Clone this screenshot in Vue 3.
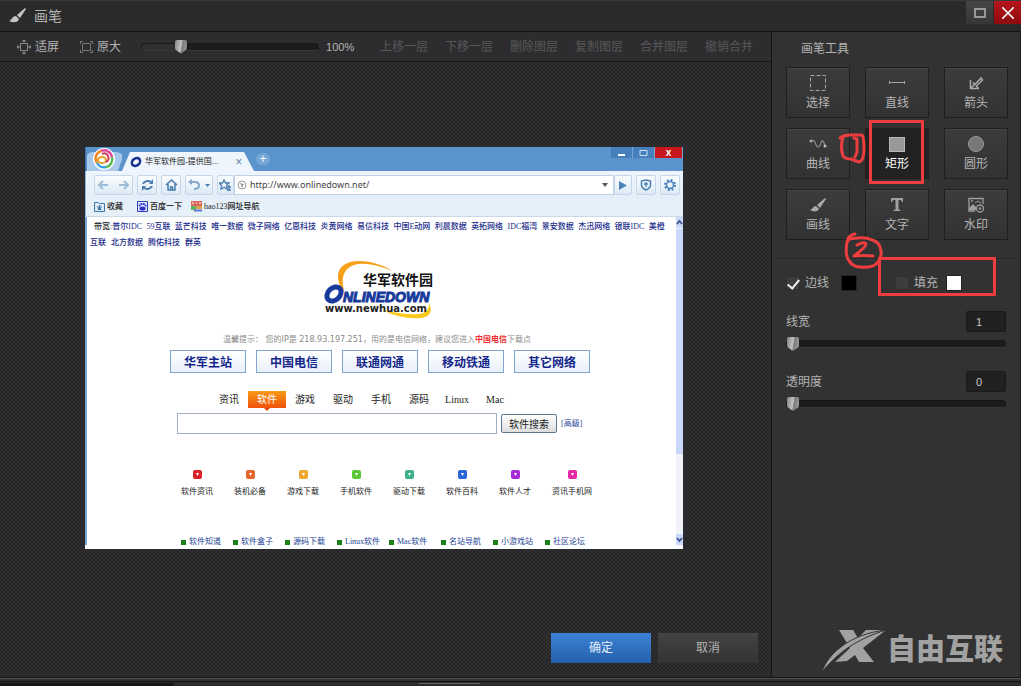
<script setup>
import { ref } from 'vue'

const zoom = ref(20)
const lineWidth = ref(1)
const opacity = ref(0)
const stroke = ref(true)
const fill = ref(false)
const address = ref('http://www.onlinedown.net/')
const keyword = ref('')
const active = ref('rect')

const layerActions = ['上移一层', '下移一层', '删除图层', '复制图层', '合并图层', '撤销合并']
const tools = [
  { id: 'select', label: '选择' },
  { id: 'line', label: '直线' },
  { id: 'arrow', label: '箭头' },
  { id: 'curve', label: '曲线' },
  { id: 'rect', label: '矩形' },
  { id: 'circle', label: '圆形' },
  { id: 'brush', label: '画线' },
  { id: 'text', label: '文字' },
  { id: 'mark', label: '水印' }
]
const sponsors = ['59互联', '蓝芒科技', '唯一数据', '微子网络', '亿恩科技', '炎黄网络', '易信科技', '中国E动网', '利晨数据', '英拓网络', 'IDC福湾', '景安数据', '杰迅网络', '银联IDC', '美橙']
const sponsorsNext = ['互联', '北方数据', '腾佑科技', '群英']
const networks = ['华军主站', '中国电信', '联通网通', '移动铁通', '其它网络']
const tabs = ['资讯', '软件', '游戏', '驱动', '手机', '源码', 'Linux', 'Mac']
const channels = [
  { label: '软件资讯', tone: 'red' },
  { label: '装机必备', tone: 'orange' },
  { label: '游戏下载', tone: 'amber' },
  { label: '手机软件', tone: 'green' },
  { label: '驱动下载', tone: 'teal' },
  { label: '软件百科', tone: 'blue' },
  { label: '软件人才', tone: 'purple' },
  { label: '资讯手机网', tone: 'pink' }
]
const footers = ['软件知道', '软件盒子', '源码下载', 'Linux软件', 'Mac软件', '名站导航', '小游戏站', '社区论坛']
</script>

<template>
  <div class="app">
    <header class="titlebar">
      <svg class="brush" width="18" height="16" viewBox="0 0 18 16">
        <path d="M0 13c3-1 3-5 7-5l3 3c-1 4-6 4-10 2zM8 7l8-7 1 1-6 9z" fill="#c4c4c4" />
      </svg>
      <h1>画笔</h1>
      <div class="winbtns">
        <button class="max" aria-label="最大化">
          <svg width="12" height="10" viewBox="0 0 12 10"><rect x="1" y="1" width="10" height="8" fill="none" stroke="#999" stroke-width="2" /></svg>
        </button>
        <button class="close" aria-label="关闭">
          <svg width="12" height="12" viewBox="0 0 12 12"><path d="M0 0l12 12M12 0L0 12" stroke="#eee" stroke-width="1.600" /></svg>
        </button>
      </div>
    </header>

    <div class="main">
      <section class="left">
        <div class="toolbar">
          <button class="fit">
            <svg width="14" height="14" viewBox="0 0 14 14"><rect x="3.500" y="3.500" width="7" height="7" fill="none" stroke="#888" /><path d="M5 0h4L7 3zM5 14h4l-2-3zM0 5v4l3-2zM14 5v4l-3-2z" fill="#888" /></svg>
            适屏
          </button>
          <button class="orig">
            <svg width="13" height="12" viewBox="0 0 13 12"><path d="M2.500 2.500h8v7h-8zM0 .5h3M.5 0v3M10 .5h3M12.500 0v3M0 11.500h3M.5 9v3M10 11.500h3M12.500 9v3" fill="none" stroke="#777" /></svg>
            原大
          </button>
          <input v-model="zoom" class="range zoom" type="range" min="0" max="100" aria-label="缩放">
          <span class="pct">100%</span>
          <div class="layers">
            <button v-for="a in layerActions" :key="a" disabled>{{ a }}</button>
          </div>
        </div>

        <div class="canvas">
          <article class="shot">
            <div class="b-title">
              <svg class="orb" width="36" height="24" viewBox="0 0 36 24">
                <path d="M1 24V9Q2 5 7 5h22q6 0 8 4l-5 15z" fill="#a9c9ea" />
                <circle cx="18" cy="12" r="11" fill="#fff" />
                <g fill="none" stroke-width="2.500">
                  <path d="M11 16a8 8 0 0 1 4-12" stroke="#f08a24" />
                  <path d="M15 4a8 8 0 0 1 11 6" stroke="#e5479a" />
                  <path d="M26 10a8 8 0 0 1-6 10" stroke="#59b94c" />
                  <path d="M20 20a8 8 0 0 1-9-4" stroke="#39a0dd" />
                  <ellipse cx="16" cy="13" rx="4" ry="3" stroke="#e2a02b" stroke-width="2" />
                  <path d="M20 15q4-2 2-6t-6-2" stroke="#ce3f5c" stroke-width="2" />
                </g>
              </svg>
              <div class="b-tab">
                <svg width="12" height="12" viewBox="0 0 12 12"><ellipse cx="6" cy="6" rx="4.500" ry="3.500" fill="none" stroke="#16308f" stroke-width="2.500" transform="rotate(-40 6 6)" /></svg>
                <span>华军软件园-提供国...</span>
                <i>×</i>
              </div>
              <span class="b-plus">+</span>
              <div class="b-win">
                <span><svg width="9" height="8" viewBox="0 0 9 8"><path d="M1 6h7" stroke="#fff" stroke-width="2" /></svg></span>
                <span><svg width="9" height="8" viewBox="0 0 9 8"><path d="M1 1.500h7v5H1z" fill="none" stroke="#cfe0f2" /></svg></span>
                <span class="x">x</span>
              </div>
            </div>

            <div class="b-nav">
              <button class="pair" aria-label="后退 前进">
                <svg width="34" height="12" viewBox="0 0 34 12"><path d="M11 6H2M6 2L2 6l4 4M22 6h9M27 2l4 4-4 4" fill="none" stroke="#9dbcd8" stroke-width="2" /></svg>
              </button>
              <button aria-label="刷新">
                <svg width="13" height="12" viewBox="0 0 13 12"><path d="M2 5a5 4 0 0 1 8-2M11 7a5 4 0 0 1-8 2" fill="none" stroke="#4b7eae" stroke-width="2" /><path d="M12 0v5H8zM1 12V7h4z" fill="#4b7eae" /></svg>
              </button>
              <button aria-label="主页">
                <svg width="13" height="12" viewBox="0 0 13 12"><path d="M1 6l5.500-5L12 6M3 5v6h7V5M5.500 11V8h2v3" fill="none" stroke="#4b7eae" stroke-width="1.500" /></svg>
              </button>
              <button class="undo" aria-label="撤销">
                <svg width="24" height="12" viewBox="0 0 24 12"><path d="M2 3h6q4 0 4 3.500T7 10" fill="none" stroke="#85a9ca" stroke-width="2" /><path d="M5 0v6L1 3z" fill="#85a9ca" /><path d="M18 5h5l-2.500 3z" fill="#4b7eae" /></svg>
              </button>
              <button class="star" aria-label="收藏此页">
                <svg width="13" height="13" viewBox="0 0 13 13"><path d="M5 1l1.500 3L10 4 7.500 6.500 8 10 5 8.500 2 10l.5-3.500L0 4l3.500 0zM8 8h4M8 11h4M10 6v6" fill="none" stroke="#4b7eae" stroke-width="1.300" /></svg>
              </button>
              <label class="addr">
                <svg width="10" height="10" viewBox="0 0 10 10"><circle cx="5" cy="5" r="4" fill="none" stroke="#999" /><path d="M3 3l4 1-2 4-1-3z" fill="#999" /></svg>
                <input v-model="address" type="text" aria-label="地址">
                <svg width="6" height="4" viewBox="0 0 6 4"><path d="M0 0h6L3 4z" fill="#555" /></svg>
              </label>
              <button class="go" aria-label="转到">
                <svg width="8" height="9" viewBox="0 0 8 9"><path d="M0 0l8 4.500L0 9z" fill="#4b84bd" /></svg>
              </button>
              <button aria-label="安全">
                <svg width="12" height="12" viewBox="0 0 12 12"><path d="M6 1l4.500 1v4q0 3-4.500 5Q1.500 9 1.500 6V2z" fill="none" stroke="#4b7eae" stroke-width="1.500" /><path d="M6 3v5M4 5h4" stroke="#4b7eae" stroke-width="1.300" /></svg>
              </button>
              <button aria-label="设置">
                <svg width="12" height="12" viewBox="0 0 12 12"><circle cx="6" cy="6" r="3.500" fill="none" stroke="#4b84bd" stroke-width="1.500" /><circle cx="6" cy="6" r="5" fill="none" stroke="#4b84bd" stroke-width="2" stroke-dasharray="2 1.930" /></svg>
              </button>
            </div>

            <div class="b-marks">
              <a href="#"><svg width="11" height="11" viewBox="0 0 11 11"><path d="M.5 1.500h4l1 1h5v8H.5z" fill="#dcebf8" stroke="#3f76a8" /><path d="M5.500 4v5M3 6h5M4 9l1.500-3L7 9" stroke="#3f76a8" /></svg>收藏</a>
              <a href="#" class="baidu"><svg width="11" height="11" viewBox="0 0 11 11"><rect width="11" height="11" fill="#dfe4ff" /><path d="M.5.5h10v10H.5z" fill="none" stroke="#3340c4" /><ellipse cx="5.500" cy="7.500" rx="3" ry="2" fill="#2932c8" /><circle cx="2.700" cy="4.500" r="1" fill="#2932c8" /><circle cx="4.500" cy="3" r="1.100" fill="#2932c8" /><circle cx="6.800" cy="3" r="1.100" fill="#2932c8" /><circle cx="8.500" cy="4.500" r="1" fill="#2932c8" /></svg>百度一下</a>
              <a href="#" class="hao"><svg width="11" height="11" viewBox="0 0 11 11"><rect width="11" height="5" fill="#dc6657" /><rect y="5" width="5" height="4" fill="#5daf62" /><rect x="5" y="5" width="6" height="3" fill="#d7a44e" /><path d="M1 2h2M5 2h1M8 2h2" stroke="#fff" /><path d="M3 9.500h8" stroke="#5b77ce" stroke-width="2" /></svg>hao123网址导航</a>
            </div>

            <div class="b-body">
              <div class="page">
                <p class="sponsors"><span class="lead">带宽:<a href="#">普尔IDC</a></span><a v-for="s in sponsors" :key="s" href="#">{{ s }}</a></p>
                <p class="sponsors next"><a v-for="s in sponsorsNext" :key="s" href="#">{{ s }}</a></p>

                <svg class="logo" width="120" height="60" viewBox="0 0 120 60">
                  <path d="M20 30C9 10 21-3 48 2q14 3 22 9Q46 1 32 5 17 10 22 31z" fill="#f7a11b" />
                  <path d="M60 50q22 5 37 4 11-2 10-11 6 13-8 15-18 2-39-8z" fill="#fbc91c" />
                  <text x="41" y="25" class="l-cn">华军软件园</text>
                  <ellipse cx="12" cy="34" rx="8" ry="6" fill="none" stroke="#173a9c" stroke-width="5" transform="rotate(-45 12 34)" />
                  <text x="21" y="42" class="l-en">NLINEDOWN</text>
                  <text x="3" y="52" class="l-url">www.newhua.com</text>
                </svg>

                <p class="tip">温馨提示： 您的IP是 218.93.197.251，用的是电信网络，建议您进入<b>中国电信</b>下载点</p>
                <div class="nets"><button v-for="n in networks" :key="n">{{ n }}</button></div>
                <nav class="tabs">
                  <a v-for="t in tabs" :key="t" href="#" :class="{ on: t === '软件' }">{{ t }}</a>
                </nav>
                <form class="search" @submit.prevent>
                  <input v-model="keyword" type="text" aria-label="搜索">
                  <button>软件搜索</button>
                  <a href="#">[高级]</a>
                </form>
                <div class="channels">
                  <a v-for="c in channels" :key="c.label" href="#">
                    <i :class="c.tone"><svg width="9" height="9" viewBox="0 0 9 9"><path d="M3 3l1.500 3L6 3z" fill="#fff" /></svg></i>
                    {{ c.label }}
                  </a>
                </div>
                <div class="foot"><a v-for="f in footers" :key="f" href="#"><i></i>{{ f }}</a></div>
              </div>
              <div class="scroll">
                <span><svg width="7" height="5" viewBox="0 0 7 5"><path d="M1 4l2.500-3L6 4" fill="none" stroke="#3c5591" stroke-width="1.800" /></svg></span>
                <span class="thumb"></span>
                <span class="down"><svg width="7" height="5" viewBox="0 0 7 5"><path d="M1 1l2.500 3L6 1" fill="none" stroke="#3c5591" stroke-width="1.800" /></svg></span>
              </div>
            </div>
          </article>
        </div>

        <div class="actions">
          <button class="ok">确定</button>
          <button class="cancel">取消</button>
        </div>
      </section>

      <aside class="panel">
        <h2>画笔工具</h2>
        <div class="tools">
          <button v-for="t in tools" :key="t.id" :class="{ on: t.id === active }" @click="active = t.id">
            <svg width="18" height="18" viewBox="0 0 18 18">
              <rect v-if="t.id === 'select'" x="1.500" y="1.500" width="15" height="15" fill="none" stroke="#a5a5a5" stroke-dasharray="4 2" />
              <path v-else-if="t.id === 'line'" d="M1 8.500h16M1.500 7v3M16.500 7v3M15.500 8v1" fill="none" stroke="#a5a5a5" />
              <path v-else-if="t.id === 'arrow'" d="M3.500 6v8.500H12M3.500 14.500l4-4M6 8.500l2 2 6-6.500 1.500 2-6 6 1.500 2" fill="none" stroke="#aaa" stroke-width="1.500" />
              <g v-else-if="t.id === 'curve'"><path d="M2 6c5-3 4 6 7 6s3-8 5-6 1 4 2 5" fill="none" stroke="#8b8b8b" stroke-width="1.300" /><circle cx="2" cy="6" r="1.500" fill="#aaa" /><circle cx="16" cy="11" r="1.500" fill="#bbb" /></g>
              <rect v-else-if="t.id === 'rect'" x="1.500" y="2.500" width="15" height="14" fill="#999" stroke="#b8b8b8" />
              <circle v-else-if="t.id === 'circle'" cx="9" cy="9" r="7.500" fill="#777" stroke="#999" />
              <path v-else-if="t.id === 'brush'" d="M1 14c3-1 3-4 6-4l3 3c-1 3-6 3-9 1zM8 9l8-7 1 1-6 9z" fill="#a8a8a8" />
              <path v-else-if="t.id === 'text'" d="M3 2h12v4h-1q0-2-2-2h-1.500v9q0 1 2 1v1h-7v-1q2 0 2-1V4H6Q4 4 4 6H3z" fill="#a0a0a0" />
              <g v-else><path d="M16 8V2.500H2V15h6" fill="none" stroke="#a0a0a0" stroke-width="1.300" /><path d="M2 12l4-4 3 3v3H2z" fill="#a0a0a0" /><circle cx="5" cy="5" r="1" fill="#a0a0a0" /><path d="M8 7l3-2 3 2" fill="none" stroke="#a0a0a0" /><circle cx="13" cy="12.500" r="3.500" fill="#353535" stroke="#a0a0a0" stroke-width="1.300" /><circle cx="13" cy="12.500" r="1.300" fill="#a0a0a0" /></g>
            </svg>
            <span>{{ t.label }}</span>
          </button>
        </div>

        <div class="opts">
          <label><input v-model="stroke" type="checkbox">边线</label>
          <button class="swatch black" aria-label="边线颜色"></button>
          <label class="fill"><input v-model="fill" type="checkbox">填充</label>
          <button class="swatch white" aria-label="填充颜色"></button>
        </div>

        <div class="field">
          <label for="lw">线宽</label>
          <input id="lw" v-model="lineWidth" type="text">
        </div>
        <input class="range" type="range" min="0" max="100" value="0" aria-label="线宽滑块">
        <div class="field">
          <label for="op">透明度</label>
          <input id="op" v-model="opacity" type="text">
        </div>
        <input class="range" type="range" min="0" max="100" value="0" aria-label="透明度滑块">

        <div class="mark">
          <svg width="66" height="44" viewBox="822 628 66 44">
            <path d="M840 629h14l5 8 8-8h20L864 647l11 14h-15l-4-7-8 6-12 1 15-14z" fill="#a2a2a2" />
            <path d="M823 671c5-17 27-38 64-42-26 8-46 20-64 42z" fill="#a2a2a2" stroke="#323232" />
          </svg>
          <strong>自由互联</strong>
        </div>

        <svg class="notes" width="249" height="270" viewBox="772 32 249 270">
          <g fill="none" stroke="#ee3d3f" stroke-width="3">
            <rect x="870.500" y="121.500" width="52" height="61" />
            <rect x="879.500" y="258.500" width="115" height="36" />
            <g stroke-linecap="round" stroke-linejoin="round">
              <path d="M843 137q-3 10 0 19 2 3 8 3l8 3q5-1 5-13t-2-14l-12 0q-6 0-10 3" />
              <path d="M854 138l3 1v13l-2 5" />
              <path d="M855 234q-7 1-8 8-2 12 1 17 4 8 12 8 12 1 16-3 6-5 5-13-1-9-9-11-6-3-14-2-9 0-10 3" />
              <path d="M857 245q8-4 9-1 0 3-12 12 9-1 19 0" />
            </g>
          </g>
        </svg>
      </aside>
    </div>
    <footer class="status"><span class="seg"></span><span class="grip"></span></footer>
  </div>
</template>

<style>
body {
  margin: 0;
  background: #2a2a2a;
}
</style>

<style scoped>
* {
  box-sizing: border-box;
}
.app {
  min-height: 100vh;
  display: flex;
  flex-direction: column;
  font: 12px/16px "Liberation Sans", "Noto Sans CJK SC", sans-serif;
  color: #b4b4b4;
}
h1, h2, p {
  margin: 0;
  font-weight: 400;
}
button {
  font: inherit;
  color: inherit;
  border: 0;
  padding: 0;
  background: none;
  white-space: nowrap;
}
a {
  color: inherit;
  text-decoration: none;
  white-space: nowrap;
}
svg {
  display: block;
  flex: none;
}
i {
  font-style: normal;
}
.titlebar {
  display: flex;
  align-items: center;
  height: 32px;
  padding-left: 9px;
  background: #2a2a2a;
  border-top: 1px solid #383838;
  border-bottom: 1px solid #141414;
}
h1 {
  font-size: 14px;
  margin-left: 7px;
}
.winbtns {
  display: flex;
  gap: 1px;
  margin-left: auto;
  align-self: flex-start;
}
.winbtns button {
  width: 27px;
  height: 23px;
  display: grid;
  place-items: center;
}
.max {
  background: linear-gradient(#464646, #353535);
}
.close {
  background: linear-gradient(#b5161b, #8c0a0e);
}
.main {
  flex: 1;
  display: grid;
  grid-template-columns: 1fr 250px;
}
.left {
  display: flex;
  flex-direction: column;
  background-color: #262628;
  background-image: radial-gradient(#303032 1px, transparent 1px), radial-gradient(#303032 1px, transparent 1px);
  background-size: 4px 4px;
  background-position: 0 0, 2px 2px;
}
.toolbar {
  display: flex;
  align-items: center;
  height: 30px;
  padding-left: 17px;
  background: #2d2d2f;
  border-bottom: 1px solid #151515;
}
.toolbar button {
  display: flex;
  align-items: center;
  gap: 4px;
}
.toolbar .orig {
  margin-left: 21px;
}
.layers {
  display: flex;
  gap: 17px;
  margin-left: 28px;
  color: #585858;
}
.range {
  appearance: none;
  display: block;
  width: 100%;
  height: 16px;
  margin: 0;
  background: none;
}
.range::-webkit-slider-runnable-track {
  height: 8px;
  border-radius: 4px;
  background: #1c1c1c;
  border: 1px solid #171717;
  border-bottom-color: #383838;
}
.range::-webkit-slider-thumb {
  appearance: none;
  width: 12px;
  height: 14px;
  margin-top: -4px;
  border-radius: 2px 2px 6px 6px;
  background: linear-gradient(100deg, #858585, #c4c4c4 50%, #7c7c7c 55%, #a0a0a0);
  clip-path: polygon(0 0, 100% 0, 100% 70%, 50% 100%, 0 70%);
}
.zoom {
  width: 178px;
  margin-left: 20px;
}
.zoom::-webkit-slider-runnable-track {
  background: linear-gradient(90deg, #303030 20%, #1c1c1c 20%);
}
.pct {
  width: 26px;
  margin-left: 7px;
  font-size: 11px;
}
.canvas {
  padding: 85px 88px 0 85px;
}
.actions {
  display: flex;
  justify-content: flex-end;
  gap: 7px;
  margin-top: auto;
  padding: 0 13px 14px 0;
}
.actions button {
  width: 100px;
  height: 30px;
}
.ok {
  background: linear-gradient(#3c83d8, #2560ab);
  color: #e2ecf8;
}
.cancel {
  background: linear-gradient(#434343, #333);
}

/* captured browser page */
.shot {
  background: #fdfeff;
  padding-bottom: 4px;
  color: #222;
  font-size: 8px;
  line-height: 12px;
}
.b-title {
  display: flex;
  height: 24px;
  background: #5b93cd;
  border-left: 1px solid #3d70a8;
}
.b-tab {
  display: flex;
  align-items: center;
  align-self: flex-end;
  gap: 3px;
  width: 132px;
  height: 19px;
  padding-left: 8px;
  background: #eef5fc;
  clip-path: polygon(0 100%, 8px 0, 122px 0, 100% 100%);
}
.b-tab i {
  margin-left: 14px;
  font-size: 12px;
  color: #6a87a5;
}
.b-plus {
  align-self: center;
  width: 14px;
  margin-left: 2px;
  border-radius: 7px;
  background: #76a6d8;
  color: #fff;
  font-size: 12px;
  text-align: center;
}
.b-win {
  display: flex;
  margin-left: auto;
}
.b-win span {
  width: 22px;
  height: 11px;
  display: grid;
  place-items: center;
  background: #4580bd;
  border-right: 1px solid #76a5d6;
}
.b-win .x {
  width: 28px;
  background: #c8171d;
  color: #fff;
  font: bold 10px/10px "Liberation Sans", sans-serif;
}
.b-nav {
  display: flex;
  align-items: center;
  gap: 4px;
  height: 28px;
  padding: 0 3px 0 8px;
  background: linear-gradient(#eef5fc, #e3eef8);
  border-left: 1px solid #8fb6dc;
}
.b-nav button {
  width: 20px;
  height: 20px;
  display: grid;
  place-items: center;
  background: linear-gradient(#fafdff, #dceaf6);
  border: 1px solid #c5d8ea;
  border-radius: 2px;
}
.b-nav .pair {
  width: 39px;
}
.b-nav .undo {
  width: 28px;
}
.b-nav .star {
  width: 17px;
  margin-right: -4px;
}
.b-nav .go {
  width: 18px;
  margin-left: -4px;
}
.addr {
  display: flex;
  flex: 1;
  align-items: center;
  gap: 3px;
  height: 20px;
  padding: 0 5px 0 2px;
  background: #fff;
  border: 1px solid #c0d2e4;
}
.addr input {
  flex: 1;
  min-width: 0;
  padding: 0;
  border: 0;
  background: none;
  color: #444;
  font: 9px/16px "Noto Sans", sans-serif;
}
.b-marks {
  display: flex;
  align-items: center;
  height: 18px;
  padding: 0 8px 2px;
  background: #e6f0f9;
  border-left: 1px solid #8fb6dc;
  border-bottom: 1px solid #cbd9e6;
}
.b-marks a {
  display: flex;
  align-items: center;
  gap: 2px;
  font-family: "Liberation Serif", "Noto Sans CJK SC", serif;
  font-weight: 500;
}
.baidu {
  margin-left: 14px;
}
.hao {
  margin-left: 9px;
}
.b-body {
  display: flex;
  border-left: 2px solid #7ba6d4;
  background: #fff;
}
.page {
  flex: 1;
  padding-top: 2px;
  font-family: "Liberation Serif", "Noto Sans CJK SC", serif;
}
.sponsors {
  display: flex;
  justify-content: space-between;
  padding: 0 11px 0 7px;
  line-height: 16px;
  font-weight: 500;
  color: #1c2d8c;
}
.lead {
  color: #222;
}
.lead a {
  color: #1c2d8c;
}
.sponsors.next {
  justify-content: flex-start;
  gap: 5px;
  padding-left: 3px;
}
.logo {
  margin: 9px 0 0 235px;
}
.l-cn {
  font: 700 14px "Noto Sans CJK SC", sans-serif;
  fill: #111;
}
.l-en {
  font: italic 700 14px "Liberation Sans", sans-serif;
  fill: #173a9c;
  stroke: #173a9c;
  stroke-width: 1px;
}
.l-url {
  font: 700 10px "DejaVu Sans", sans-serif;
  fill: #222;
}
.tip {
  margin: 14px 0 0 136px;
  white-space: nowrap;
  color: #8a8a8a;
  font-family: "DejaVu Sans", "Noto Sans CJK SC", sans-serif;
}
.tip b {
  color: #f03030;
}
.nets {
  display: flex;
  gap: 10px;
  margin: 4px 0 0 83px;
}
.nets button {
  width: 76px;
  height: 23px;
  border: 1px solid #82a5ce;
  background: linear-gradient(#fff, #e9f0fa);
  color: #14268a;
  font: 700 12px/20px "Noto Sans CJK SC", sans-serif;
}
.tabs {
  display: flex;
  margin: 18px 0 0 123px;
  font-size: 10px;
  line-height: 17px;
}
.tabs a {
  width: 38px;
  text-align: center;
}
.tabs .on {
  position: relative;
  color: #fff;
  background: linear-gradient(#f99a14, #f0520c);
}
.tabs .on::after {
  content: "";
  position: absolute;
  left: 16px;
  top: 17px;
  border: 3px solid transparent;
  border-top-color: #e0480c;
}
.search {
  display: flex;
  align-items: center;
  gap: 4px;
  margin: 5px 0 0 90px;
}
.search input {
  width: 320px;
  height: 21px;
  border: 1px solid #a3b0bf;
  background: #fff;
}
.search button {
  width: 56px;
  height: 19px;
  border: 1px solid #5c7994;
  border-radius: 2px;
  background: linear-gradient(#fff, #dedede);
  font: 10px/16px "Noto Sans CJK SC", sans-serif;
}
.search a {
  color: #1c3f95;
}
.channels {
  display: flex;
  gap: 21px;
  margin: 36px 0 0 94px;
}
.channels a {
  display: flex;
  flex-direction: column;
  align-items: center;
  gap: 7px;
}
.channels i {
  width: 9px;
  height: 9px;
  border-radius: 2px;
}
.red { background: #d8232a; }
.orange { background: #e5652a; }
.amber { background: #f0a72f; }
.green { background: #5bc936; }
.teal { background: #3fb28c; }
.blue { background: #2a66d8; }
.purple { background: #a72bd6; }
.pink { background: #e32aa4; }
.foot {
  display: grid;
  grid-template-columns: repeat(8, 52px);
  height: 9px;
  margin: 38px 0 0 94px;
  overflow: hidden;
  color: #1c3f95;
}
.foot a {
  display: flex;
  align-items: center;
  gap: 3px;
  height: 12px;
}
.foot i {
  width: 5px;
  height: 5px;
  background: #178017;
}
.scroll {
  display: flex;
  flex-direction: column;
  width: 7px;
  background: #f1f2f8;
}
.scroll span {
  display: grid;
  place-items: center;
  height: 11px;
  background: #cad8fb;
}
.scroll .thumb {
  height: 225px;
  margin-top: 1px;
}
.scroll .down {
  margin-top: auto;
}

/* tool panel */
.panel {
  position: relative;
  display: flex;
  flex-direction: column;
  padding: 9px 14px 4px;
  background: #323232;
  border-left: 1px solid #161616;
  border-right: 1px solid #1c1c1c;
}
h2 {
  padding-left: 15px;
  font-size: 12px;
}
.tools {
  display: grid;
  grid-template-columns: repeat(3, 1fr);
  gap: 10px 15px;
  margin: 10px -2px 0 0;
}
.tools button {
  display: flex;
  flex-direction: column;
  align-items: center;
  gap: 3px;
  height: 51px;
  padding-top: 6px;
  background: linear-gradient(#3c3c3c, #323232);
  border: 1px solid #1f1f1f;
  box-shadow: inset 0 1px #454545;
}
.tools .on {
  background: #222;
  box-shadow: none;
  color: #fff;
}
.opts {
  display: flex;
  align-items: center;
  height: 49px;
  margin: 18px -9px 0;
  padding: 0 9px;
  border-top: 1px solid #252525;
  box-shadow: inset 0 1px #3a3a3a;
}
.opts label {
  display: flex;
  align-items: center;
  gap: 5px;
}
.opts input {
  appearance: none;
  width: 14px;
  height: 14px;
  margin: 0;
  background: #3d3d3d;
  border: 1px solid #2f2f2f;
}
.opts input:checked {
  display: grid;
  place-items: center;
}
.opts input:checked::after {
  content: "";
  width: 5px;
  height: 10px;
  border: solid #eee;
  border-width: 0 2px 2px 0;
  transform: rotate(40deg);
}
.swatch {
  width: 16px;
  height: 16px;
  margin-left: 12px;
  border: 1px solid #222;
}
.opts .swatch.black {
  background: #000;
}
.opts .swatch.white {
  margin-left: 8px;
  background: #fff;
}
.opts .fill {
  margin-left: 38px;
}
.field {
  display: flex;
  align-items: center;
  justify-content: space-between;
  height: 21px;
  margin-top: 4px;
}
.field input {
  width: 40px;
  height: 21px;
  padding: 0 0 0 9px;
  border: 1px solid #1a1a1a;
  border-radius: 2px;
  background: #212121;
  color: #c8c8c8;
  font: 11px/16px "Liberation Sans", sans-serif;
}
.field + .range {
  margin-top: 4px;
}
.range + .field {
  margin-top: 19px;
}
.mark {
  display: flex;
  align-items: flex-start;
  justify-content: flex-end;
  margin-top: auto;
  padding-right: 3px;
  color: #a2a2a2;
}
.mark strong {
  font: 900 29px/36px "Noto Sans CJK SC", sans-serif;
}
.notes {
  position: absolute;
  left: 0;
  top: 0;
  pointer-events: none;
}
.status {
  display: flex;
  align-items: flex-end;
  height: 9px;
  background: linear-gradient(#151515 1px, #505050 1px, #505050 2px, #303030 2px, #303030 4px, #141414 4px, #141414 5px, #2c2c2c 5px);
}
.seg {
  width: 17%;
  height: 3px;
  background: #181818;
}
.grip {
  width: 6%;
  height: 3px;
  margin-left: 24%;
  border-top: 1px solid #666;
}
</style>
